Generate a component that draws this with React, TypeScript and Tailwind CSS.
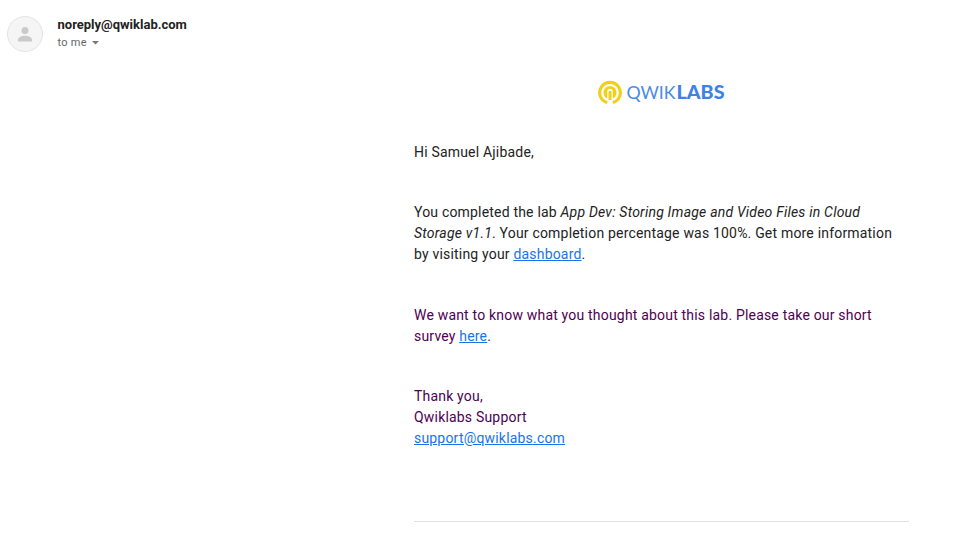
import React from "react";

export default function App() {
  return (
    <div className="h-[536px] w-[966px] overflow-hidden bg-white font-[Roboto,sans-serif] text-[#222]">
      <header className="flex h-[60px] items-start pl-[7px] pt-[16px]">
        <svg width="36" height="36" viewBox="0 0 36 36">
          <circle cx="18" cy="18" r="17.5" fill="#f5f5f5" stroke="#e3e3e3" />
          <circle cx="18" cy="14.5" r="3.5" fill="#cacaca" />
          <path d="M11 25.5v-2c0-2.5 4.5-3.8 7-3.8s7 1.3 7 3.8v2z" fill="#cacaca" />
        </svg>
        <div className="ml-[14.5px]">
          <div className="text-[13px] leading-[18px] font-bold">noreply@qwiklab.com</div>
          <div className="flex items-center gap-[5px] text-[11px] leading-[18px] text-[#666] tracking-[0.25px]">
            to me
            <svg width="7" height="4" viewBox="0 0 7 4"><path d="M0 0h7L3.5 3.5z" fill="#777" /></svg>
          </div>
        </div>
      </header>
      <main className="ml-[414px] w-[495px]">
        <div className="flex h-[64px] items-center justify-center">
          <svg width="128" height="26" viewBox="0 0 128 26">
            <path d="M9.3 23.6A10.3 10.3 0 1 1 14.7 23.6" fill="none" stroke="#f2cf1d" strokeWidth="3.1" />
            <path d="M9.3 19.6A6.6 6.6 0 1 1 14.7 19.6V12.5A2.7 2.7 0 0 0 9.3 12.5Z" fill="#f2cf1d" />
            <path d="M12 12v9" stroke="#f2cf1d" strokeWidth="3" />
            <text x="28.5" y="20" fontSize="18" fill="#4a8ae8" fontFamily="Lato" fontWeight="400" textLength="49" lengthAdjust="spacingAndGlyphs">QWIK</text>
            <text x="78.5" y="20" fontSize="18" fill="#3f82e6" fontFamily="Lato" fontWeight="900" textLength="48" lengthAdjust="spacingAndGlyphs">LABS</text>
          </svg>
        </div>
        <div className="pt-[18px] text-[14px] leading-[21px] tracking-[0.19px]">
          <p>Hi Samuel Ajibade,</p>
          <p className="mt-[39px]">You completed the lab <em className="tracking-[0.21px]">App Dev: Storing Image and Video Files in Cloud<br />Storage v1.1</em>. Your completion percentage was 100%. Get more information<br />by visiting your <a className="text-[#1a73e8] underline">dashboard</a>.</p>
          <p className="mt-[40px] text-[#500050]">We want to know what you thought about this lab. Please take our short<br />survey <a className="text-[#1a73e8] underline">here</a>.</p>
          <p className="mt-[39px] text-[#500050]">Thank you,<br />Qwiklabs Support<br /><a className="text-[#1a73e8] underline">support@qwiklabs.com</a></p>
        </div>
        <hr className="mt-[72px] border-[#e0e0e0]" />
      </main>
    </div>
  );
}
